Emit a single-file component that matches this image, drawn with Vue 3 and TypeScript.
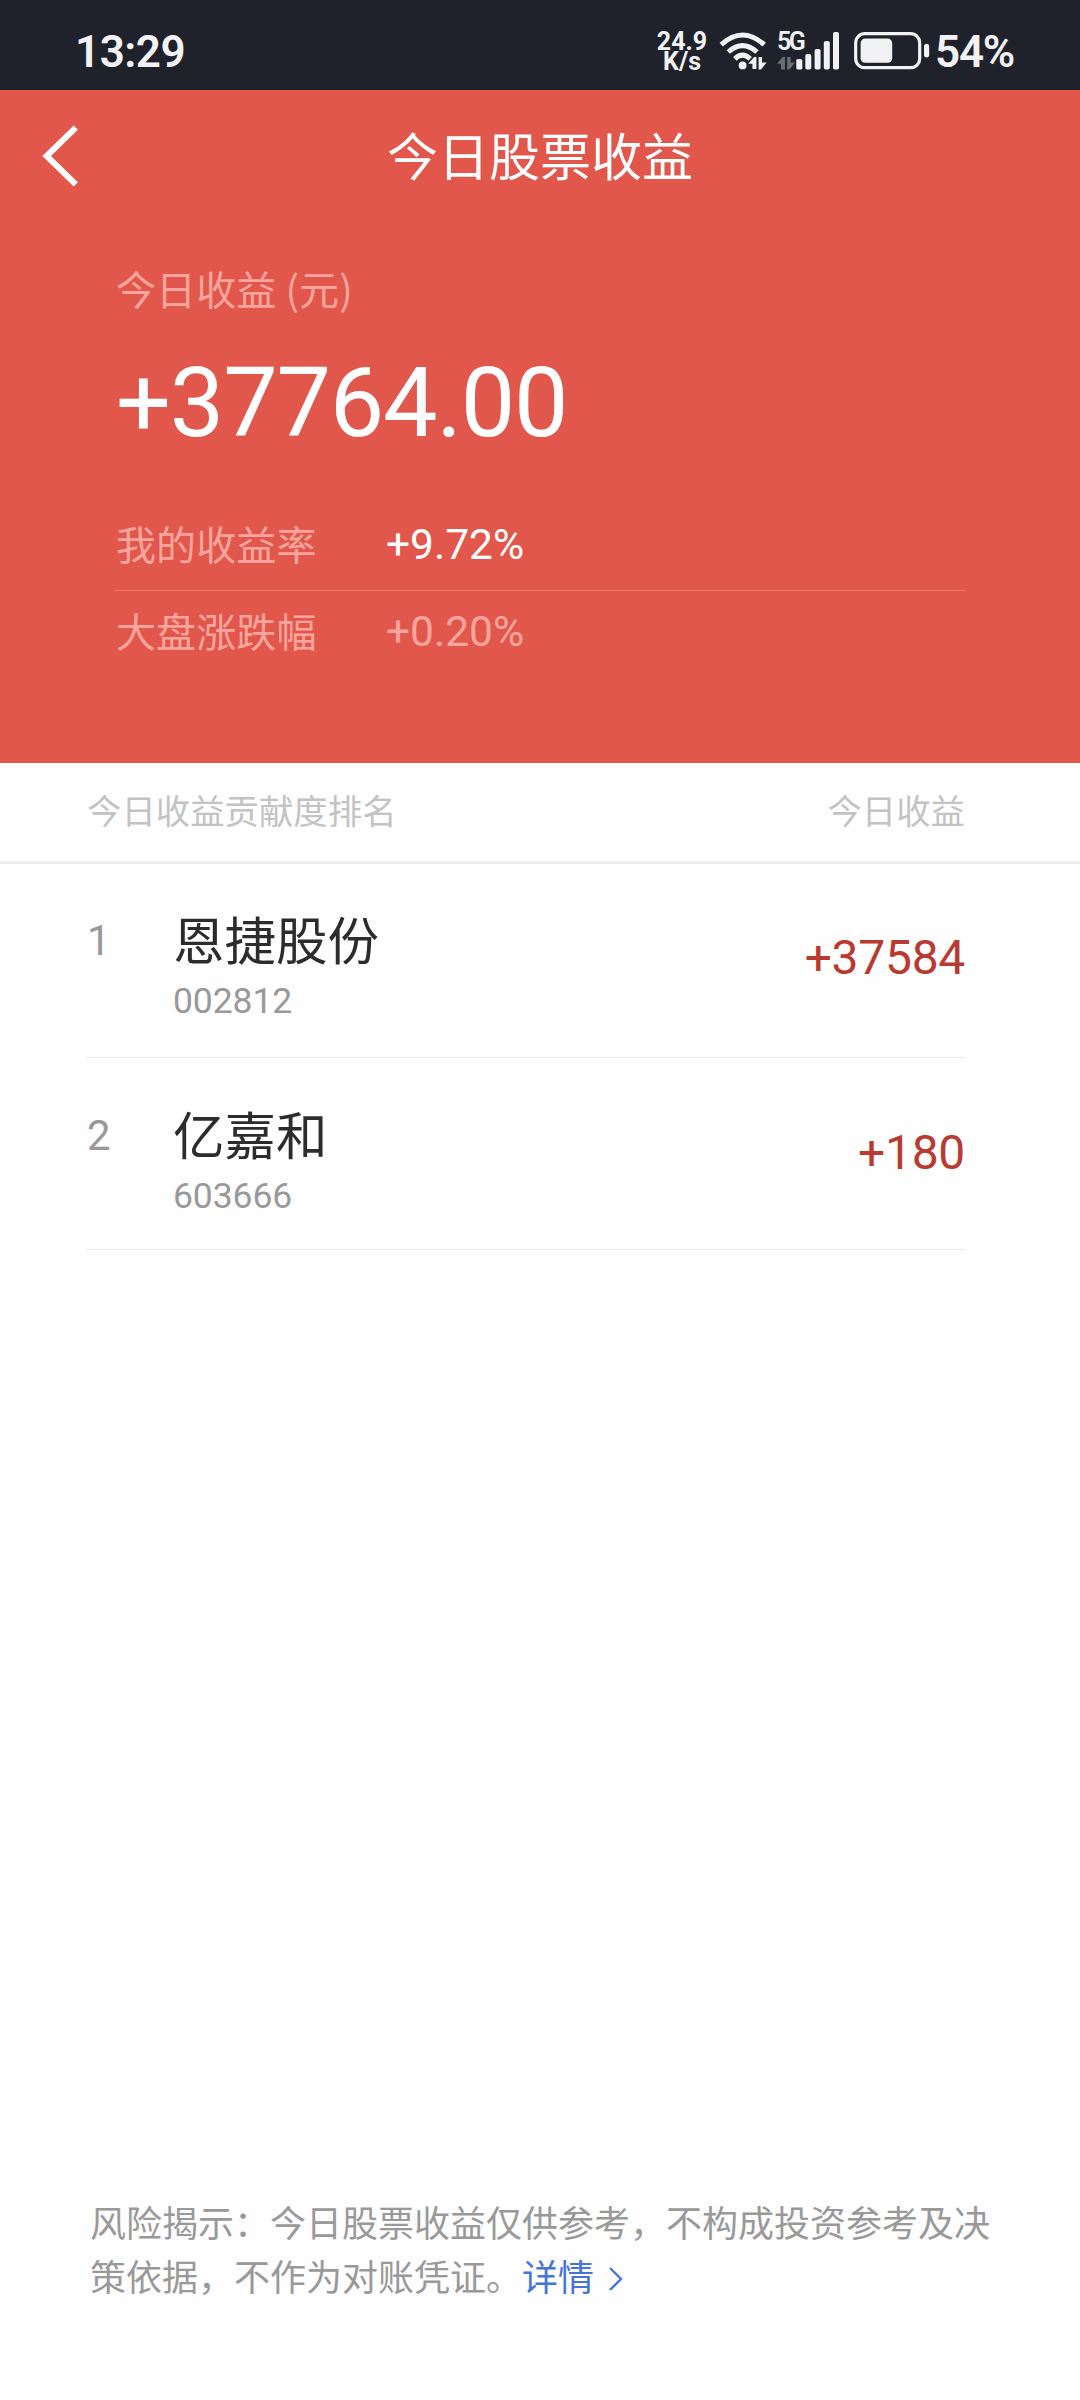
<script setup lang="ts">
interface Holding {
  name: string
  code: string
  profit: string
}

const holdings: Holding[] = [
  { name: '恩捷股份', code: '002812', profit: '+37584' },
  { name: '亿嘉和', code: '603666', profit: '+180' },
]
</script>

<template>
  <div class="screen">
    <header class="status">
      <span class="clock">13:29</span>
      <div class="speed"><span class="rate">24.9</span><span class="unit">K/s</span></div>
      <svg class="wifi" width="50" height="40" viewBox="0 0 50 40" fill="none">
        <g stroke="#f2f2f5" stroke-width="5">
          <path d="M2.2 12.6 Q23.5 -6.6 45.2 12.6" />
          <path d="M9.2 20 Q23.5 7.2 38 20" />
          <path d="M15.8 26.8 Q23.5 19.6 31.2 26.8" />
        </g>
        <circle cx="23.6" cy="33.4" r="3.9" fill="#f2f2f5" />
        <path d="M29.2 31.8 L35.2 25 H37.4 V37 H33.4 V31.8 Z M39.6 25 H43 V30.6 H47.6 L42 37.4 H39.6 Z" fill="#f2f2f5" />
      </svg>
      <div class="cell">
        <span class="net">5G</span>
        <svg class="bars" width="64" height="40" viewBox="0 0 64 40">
          <path d="M0 31.8 L5.6 25 H8 V37.5 H4 V31.8 Z M10.2 25 H13.6 V30.6 H18 L12.6 37.5 H10.2 Z" fill="#6c6e76" />
          <g fill="#f2f2f5">
            <rect x="19.3" y="27" width="6" height="10.5" rx="1.6" />
            <rect x="28.3" y="22" width="6" height="15.5" rx="1.8" />
            <rect x="37.6" y="17" width="6" height="20.5" rx="1.8" />
            <rect x="46.8" y="9" width="6" height="28.5" rx="1.8" />
            <rect x="56" y="0" width="6" height="37.5" rx="1.8" />
          </g>
        </svg>
      </div>
      <svg class="battery" width="76" height="38" viewBox="0 0 76 38">
        <rect x="1.7" y="1.7" width="64" height="34" rx="9" fill="none" stroke="#f2f2f5" stroke-width="3.2" />
        <rect x="6.6" y="6.6" width="31.6" height="24.2" rx="4.5" fill="#f2f2f5" />
        <rect x="70" y="11.8" width="5.2" height="13.6" rx="2.6" fill="#f2f2f5" />
      </svg>
      <span class="percent">54%</span>
    </header>

    <section class="hero">
      <nav class="nav">
        <svg class="back" width="40" height="62" viewBox="0 0 40 62" fill="none">
          <path d="M35.8 2.6 L6.6 31 L35.8 59.4" stroke="#fff" stroke-width="6" />
        </svg>
        <h1 class="title">今日股票收益</h1>
      </nav>
      <div class="summary">
        <p class="label">今日收益 (元)</p>
        <p class="total">+37764.00</p>
        <div class="line mine">
          <span class="label">我的收益率</span>
          <span class="value">+9.72%</span>
        </div>
        <div class="line market">
          <span class="label">大盘涨跌幅</span>
          <span class="value">+0.20%</span>
        </div>
      </div>
    </section>

    <div class="head"><span>今日收益贡献度排名</span><span>今日收益</span></div>

    <ul class="list">
      <li v-for="(h, i) in holdings" :key="h.code" class="row">
        <span class="rank">{{ i + 1 }}</span>
        <div class="stock">
          <span class="name">{{ h.name }}</span>
          <span class="code">{{ h.code }}</span>
        </div>
        <span class="profit">{{ h.profit }}</span>
      </li>
    </ul>

    <footer class="risk">
      风险揭示：今日股票收益仅供参考，不构成投资参考及决策依据，不作为对账凭证。<a class="more">详情<svg class="arrow" width="16" height="26" viewBox="0 0 16 26" fill="none"><path d="M2 2 L13 13 L2 24" stroke="#4674d8" stroke-width="2.4" /></svg></a>
    </footer>
  </div>
</template>

<style>
body {
  margin: 0;
  background: #fefefe;
}
</style>

<style scoped>
.screen {
  display: flex;
  flex-direction: column;
  width: 1080px;
  height: 2400px;
  background: #fefefe;
  font-family: "Noto Sans CJK SC", sans-serif;
}
.status {
  display: flex;
  align-items: flex-start;
  box-sizing: border-box;
  height: 90px;
  padding: 32px 0 0 75px;
  background: #1f222a;
  color: #f2f2f5;
  font-family: Roboto, sans-serif;
  font-weight: 600;
  white-space: nowrap;
}
.clock {
  width: 582px;
  font-size: 44px;
  line-height: 40px;
  letter-spacing: -0.5px;
}
.speed {
  display: flex;
  flex-direction: column;
  align-items: center;
  width: 50px;
  margin-right: 12px;
  font-size: 25px;
  font-weight: 700;
  line-height: 20px;
}
.cell {
  display: flex;
  flex-direction: column;
  width: 64px;
  height: 40px;
  margin: 0 13px 0 8px;
}
.net {
  height: 0;
  font-size: 25px;
  line-height: 20px;
  letter-spacing: -2.5px;
}
.percent {
  margin-left: 5px;
  font-size: 44px;
  line-height: 40px;
  letter-spacing: -1.2px;
}
.hero {
  height: 673px;
  background: #e2574c;
}
.nav {
  display: grid;
  grid-template-columns: 120px 1fr 120px;
  align-items: center;
  height: 126px;
}
.back {
  margin: 6px 0 0 40px;
}
.title {
  margin: 0;
  padding-top: 2px;
  color: #fff;
  font-size: 51px;
  font-weight: 400;
  line-height: 70px;
  text-align: center;
}
.summary {
  padding: 42px 115px 0;
}
.label {
  margin: 0;
  padding-left: 1px;
  color: #f9a59e;
  font-size: 40px;
  line-height: 60px;
  letter-spacing: 0.1px;
}
.total {
  margin: 35px 0 43px 1px;
  color: #fff;
  font-family: Roboto, sans-serif;
  font-size: 97px;
  line-height: 100px;
  letter-spacing: -1.2px;
}
.line {
  display: flex;
  align-items: center;
}
.line .label {
  width: 270px;
}
.line .value {
  padding-top: 4px;
  font-family: Roboto, sans-serif;
  font-size: 42.5px;
  line-height: 60px;
}
.mine {
  height: 94px;
  border-bottom: 1px solid #ed7169;
}
.mine .value {
  color: #fff;
}
.market {
  height: 77px;
}
.market .value {
  color: #f9a59e;
}
.head {
  display: flex;
  justify-content: space-between;
  align-items: center;
  box-sizing: border-box;
  height: 101px;
  padding: 0 115px 6px 87px;
  border-bottom: 3px solid #eee;
  color: #c3c3c3;
  font-size: 34.4px;
}
.list {
  margin: 0;
  padding: 0 115px 0 86px;
  list-style: none;
}
.row {
  display: flex;
  box-sizing: border-box;
  height: 194px;
  border-bottom: 1px solid #ececec;
}
.row + .row {
  height: 192px;
  padding-top: 1px;
}
.rank {
  width: 86px;
  margin-top: 45px;
  padding-left: 1px;
  color: #999;
  font-family: Roboto, sans-serif;
  font-size: 42px;
  line-height: 64px;
}
.stock {
  display: flex;
  flex: 1;
  flex-direction: column;
}
.name {
  margin-top: 42px;
  color: #2c2c2c;
  font-size: 51.5px;
  line-height: 64px;
}
.code {
  margin-top: 10px;
  color: #999;
  font-family: Roboto, sans-serif;
  font-size: 35.5px;
  line-height: 42px;
  letter-spacing: -0.1px;
}
.profit {
  margin-top: 62px;
  color: #b83a31;
  font-family: Roboto, sans-serif;
  font-size: 48px;
  line-height: 64px;
  letter-spacing: -0.3px;
}
.risk {
  width: 902px;
  margin: auto 0 98px 90px;
  color: #999;
  font-size: 36px;
  line-height: 54px;
}
.more {
  color: #4674d8;
}
.arrow {
  margin-left: 14px;
  vertical-align: -1px;
}
</style>
